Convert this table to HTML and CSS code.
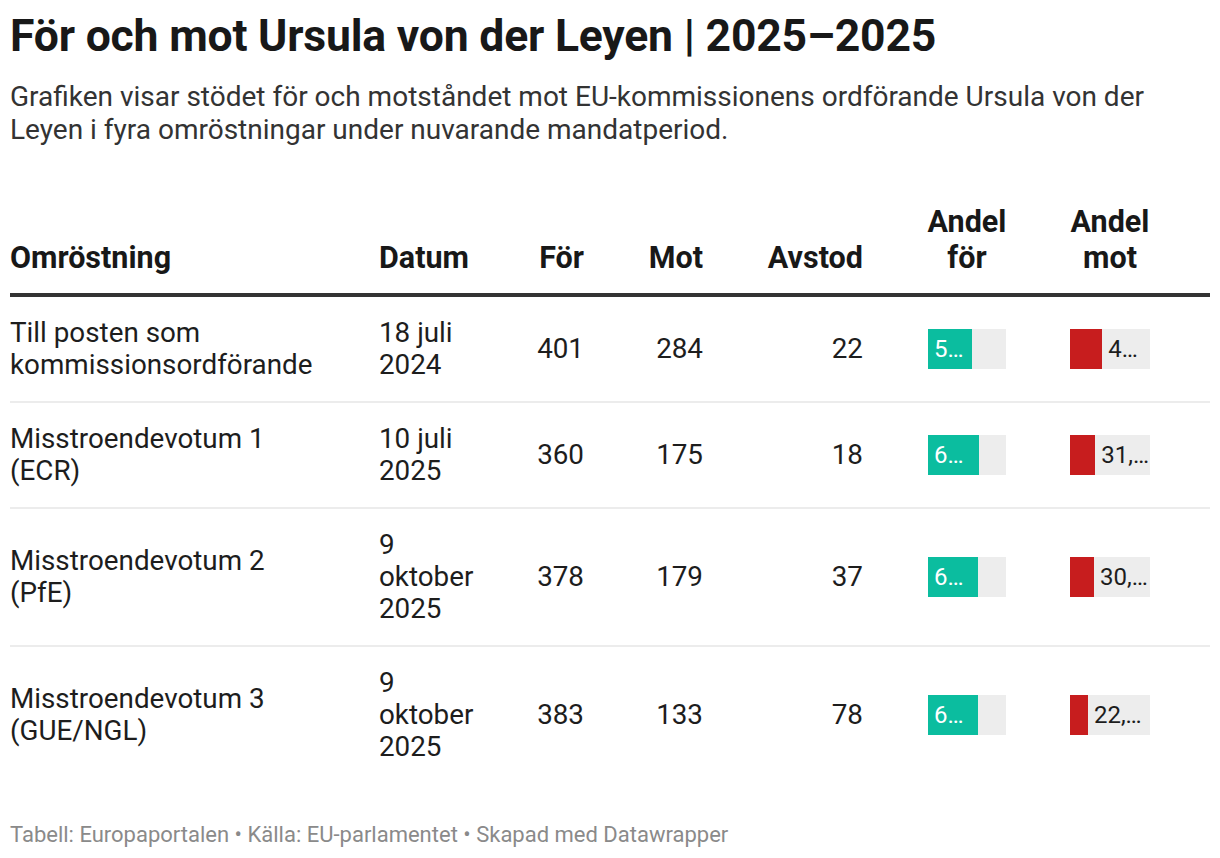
FILE: index.html
```html
<!DOCTYPE html>
<html lang="sv">
<head>
<meta charset="utf-8">
<title>För och mot Ursula von der Leyen</title>
<link rel="stylesheet" href="styles.css">
</head>
<body>
<div class="chart">
  <h1 class="title">För och mot Ursula von der Leyen | 2025–2025</h1>
  <p class="desc">Grafiken visar stödet för och motståndet mot EU-kommissionens ordförande Ursula von der Leyen i fyra omröstningar under nuvarande mandatperiod.</p>

  <div class="table">
    <div class="row head">
      <div class="c c1">Omröstning</div>
      <div class="c c2">Datum</div>
      <div class="c c3 num">För</div>
      <div class="c c4 num">Mot</div>
      <div class="c c5 num">Avstod</div>
      <div class="c c6"><div class="hbar g">Andel för</div></div>
      <div class="c c7"><div class="hbar r">Andel mot</div></div>
    </div>

    <div class="row">
      <div class="c c1">Till posten som kommissionsordförande</div>
      <div class="c c2">18 juli 2024</div>
      <div class="c c3 num">401</div>
      <div class="c c4 num">284</div>
      <div class="c c5 num">22</div>
      <div class="c c6"><div class="bar g"><div class="fill green" style="width:56.7%"><span class="lbl">56,7 %</span></div></div></div>
      <div class="c c7"><div class="bar r"><div class="fill red" style="width:40.2%"></div><span class="lbl out">40,2 %</span></div></div>
    </div>

    <div class="row">
      <div class="c c1">Misstroendevotum 1 (ECR)</div>
      <div class="c c2">10 juli 2025</div>
      <div class="c c3 num">360</div>
      <div class="c c4 num">175</div>
      <div class="c c5 num">18</div>
      <div class="c c6"><div class="bar g"><div class="fill green" style="width:65.1%"><span class="lbl">65,1 %</span></div></div></div>
      <div class="c c7"><div class="bar r"><div class="fill red" style="width:31.6%"></div><span class="lbl out">31,6 %</span></div></div>
    </div>

    <div class="row">
      <div class="c c1">Misstroendevotum 2 (PfE)</div>
      <div class="c c2">9 oktober 2025</div>
      <div class="c c3 num">378</div>
      <div class="c c4 num">179</div>
      <div class="c c5 num">37</div>
      <div class="c c6"><div class="bar g"><div class="fill green" style="width:63.6%"><span class="lbl">63,6 %</span></div></div></div>
      <div class="c c7"><div class="bar r"><div class="fill red" style="width:30.1%"></div><span class="lbl out">30,1 %</span></div></div>
    </div>

    <div class="row">
      <div class="c c1">Misstroendevotum 3 (GUE/NGL)</div>
      <div class="c c2">9 oktober 2025</div>
      <div class="c c3 num">383</div>
      <div class="c c4 num">133</div>
      <div class="c c5 num">78</div>
      <div class="c c6"><div class="bar g"><div class="fill green" style="width:64.5%"><span class="lbl">64,5 %</span></div></div></div>
      <div class="c c7"><div class="bar r"><div class="fill red" style="width:22.4%"></div><span class="lbl out">22,4 %</span></div></div>
    </div>
  </div>

  <p class="foot">Tabell: Europaportalen • Källa: EU-parlamentet • Skapad med Datawrapper</p>
</div>
</body>
</html>
```

FILE: styles.css
```css
* { box-sizing: border-box; }
html, body { margin: 0; padding: 0; background: #fff; }
body {
  font-family: Roboto, "Noto Sans", "Liberation Sans", sans-serif;
  color: #1d1d1d;
}
.chart {
  padding: 10px 10px 0 10px;
  width: 1220px;
}
.title {
  margin: 0;
  font-size: 44.5px;
  line-height: 52px;
  font-weight: 700;
  color: #181818;
  letter-spacing: -0.2px;
}
.desc {
  margin: 18px 0 0 0;
  font-size: 28px;
  line-height: 33px;
  color: #333;
  width: 1200px;
}
.table {
  margin-top: 58px;
  width: 1200px;
}
.row {
  display: grid;
  grid-template-columns: 369px 100px 105px 119px 160px 143px 204px;
  align-items: center;
  border-bottom: 2px solid #ececec;
  padding: 20px 0 20px 0;
  font-size: 27.8px;
  line-height: 32px;
}
.row:last-child { border-bottom: none; }
.row.head {
  align-items: end;
  font-weight: 700;
  font-size: 30.5px;
  line-height: 36px;
  border-bottom: 4px solid #333;
  padding: 0 0 17px 0;
  color: #181818;
}
.c { min-width: 0; }
.c1 { padding-right: 50px; }
.num { text-align: right; }
.hbar { text-align: center; }
.hbar.g { margin-left: 55px; width: 98px; }
.hbar.r { margin-left: 54px; width: 100px; }
.bar {
  height: 40px;
  background: #ededed;
  display: flex;
  align-items: center;
  overflow: hidden;
}
.bar.g { margin-left: 65px; width: 78px; }
.bar.r { margin-left: 64px; width: 80px; }
.fill {
  height: 100%;
  display: flex;
  align-items: center;
  flex: none;
  overflow: hidden;
}
.fill.green { background: #0bbd9f; }
.fill.red { background: #c71d1e; }
.lbl {
  font-size: 24px;
  line-height: 40px;
  white-space: nowrap;
  overflow: hidden;
  text-overflow: ellipsis;
  min-width: 0;
}
.fill .lbl { color: #fff; padding-left: 6px; padding-right: 2px; }
.lbl.out { color: #1d1d1d; padding-left: 6px; padding-right: 0; flex: 1; }
.foot {
  margin: 39px 0 0 0;
  font-size: 22px;
  line-height: 26px;
  color: #8a8a8a;
}
```
